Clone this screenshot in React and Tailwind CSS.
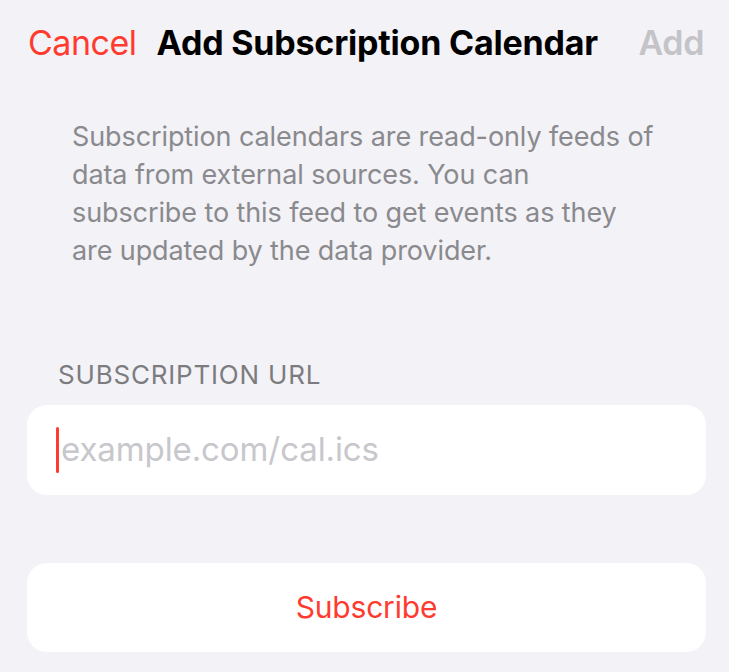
import React from "react";

const font = { fontFamily: "Inter, 'Noto Sans', sans-serif" };

export default function App() {
  return (
    <div
      className="w-[729px] h-[672px] bg-[#f2f2f7] overflow-hidden flex flex-col"
      style={font}
    >
      {/* nav bar */}
      <div className="flex items-center pl-[28px] pr-[25px] pt-[22px] h-[64px]">
        <button className="text-[#ff3b30] text-[34px] leading-none tracking-[-0.5px]">Cancel</button>
        <h1 className="ml-[20px] text-black text-[34px] leading-none font-bold tracking-[-0.2px]">
          Add Subscription Calendar
        </h1>
        <button className="ml-auto text-[#c4c4c8] text-[34px] leading-none font-semibold tracking-[-0.4px]">
          Add
        </button>
      </div>

      <p className="mt-[54px] ml-[72px] text-[27px] leading-[38px] text-[#8a8a8e] tracking-[-0.1px]">
        Subscription calendars are read-only feeds of
        <br />
        data from external sources. You can
        <br />
        subscribe to this feed to get events as they
        <br />
        are updated by the data provider.
      </p>

      <div className="mt-[92px] ml-[58px] text-[26px] text-[#7c7c80] tracking-[0.8px] leading-none">
        SUBSCRIPTION URL
      </div>

      <div className="mt-[17px] ml-[27px] mr-[23px] h-[90px] bg-white rounded-[20px] flex items-center pl-[29px]">
        <span className="w-[3px] h-[46px] bg-[#ff3b30] rounded-full" />
        <span className="ml-[2px] text-[33px] text-[#c7c7cc] tracking-[-0.1px]">example.com/cal.ics</span>
      </div>

      <button className="mt-[68px] ml-[27px] mr-[23px] h-[89px] bg-white rounded-[20px] flex items-center justify-center text-[30px] text-[#ff3b30] tracking-[-0.2px]">
        Subscribe
      </button>
    </div>
  );
}
